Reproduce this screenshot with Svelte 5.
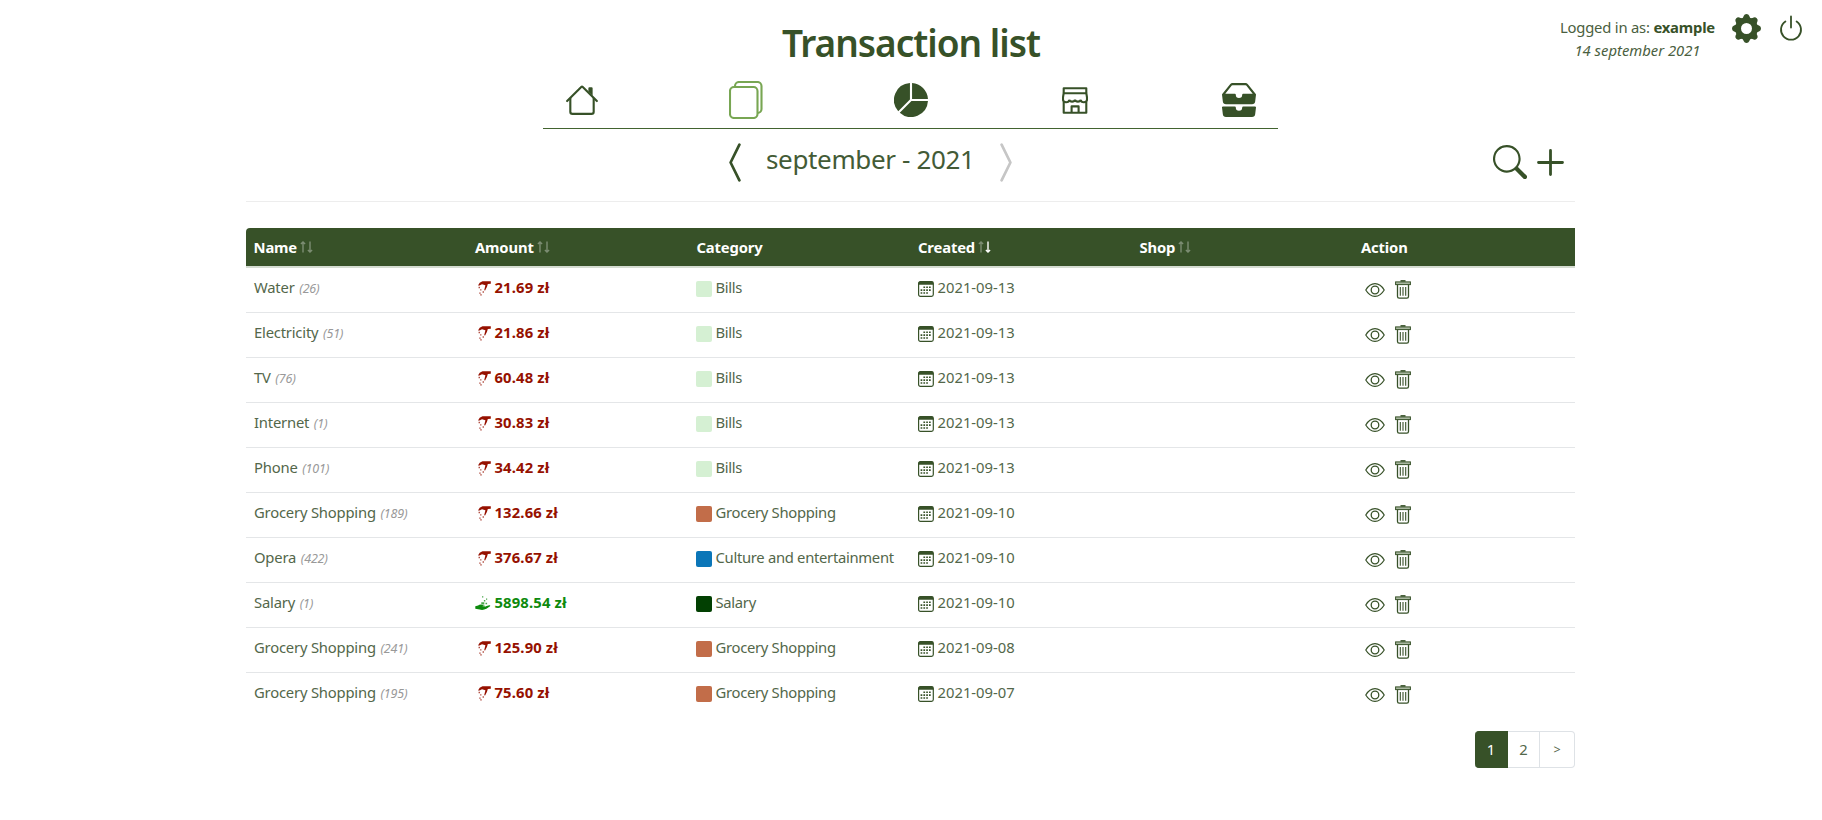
<script>
  const columns = [
    { label: 'Name', sort: 'none' },
    { label: 'Amount', sort: 'none' },
    { label: 'Category' },
    { label: 'Created', sort: 'desc' },
    { label: 'Shop', sort: 'none' },
    { label: 'Action' }
  ];
  const colors = {
    Bills: '#d5f0d3',
    'Grocery Shopping': '#c26d49',
    'Culture and entertainment': '#0b76b8',
    Salary: '#024002'
  };
  const rows = [
    ['Water', 26, '21.69', 'Bills', '2021-09-13'],
    ['Electricity', 51, '21.86', 'Bills', '2021-09-13'],
    ['TV', 76, '60.48', 'Bills', '2021-09-13'],
    ['Internet', 1, '30.83', 'Bills', '2021-09-13'],
    ['Phone', 101, '34.42', 'Bills', '2021-09-13'],
    ['Grocery Shopping', 189, '132.66', 'Grocery Shopping', '2021-09-10'],
    ['Opera', 422, '376.67', 'Culture and entertainment', '2021-09-10'],
    ['Salary', 1, '5898.54', 'Salary', '2021-09-10'],
    ['Grocery Shopping', 241, '125.90', 'Grocery Shopping', '2021-09-08'],
    ['Grocery Shopping', 195, '75.60', 'Grocery Shopping', '2021-09-07']
  ];
</script>

<div class="page">
  <header>
    <h1>Transaction list</h1>
    <div class="user">
      <div class="who">
        <div>Logged in as: <b>example</b></div>
        <i>14 september 2021</i>
      </div>
      <svg class="gear" width="29" height="29" viewBox="-14 -14 28 28">
        <circle r="8" fill="none" stroke="currentColor" stroke-width="5.4" />
        {#each [0, 45, 90, 135, 180, 225, 270, 315] as a}
          <path transform="rotate({a})" d="M-5-9.3Q-3.1-10.2-2.6-12.4Q-2-14 0-14T2.6-12.4Q3.1-10.2 5-9.3z" fill="currentColor" />
        {/each}
      </svg>
      <svg class="power" width="24" height="26" viewBox="0 0 24 26" fill="none" stroke="currentColor" stroke-width="1.8" stroke-linecap="round">
        <path d="M12 1.5v11M6.4 6.4a10 10 0 1 0 11.2 0" />
      </svg>
    </div>
  </header>

  <nav>
    <span>
      <svg width="34" height="34" viewBox="0 0 16 16" fill="currentColor"><path d="M2 13.5V7h1v6.5a.5.5 0 0 0 .5.5h9a.5.5 0 0 0 .5-.5V7h1v6.5a1.5 1.5 0 0 1-1.5 1.5h-9A1.5 1.5 0 0 1 2 13.5zm11-11V6l-2-2V2.5a.5.5 0 0 1 .5-.5h1a.5.5 0 0 1 .5.5z" /><path d="M7.293 1.5a1 1 0 0 1 1.414 0l6.647 6.646a.5.5 0 0 1-.708.708L8 2.207 1.354 8.854a.5.5 0 1 1-.708-.708L7.293 1.5z" /></svg>
    </span>
    <span class="active">
      <svg width="34" height="38" viewBox="0 0 34 38" fill="none" stroke="currentColor" stroke-width="2.1"><rect x="1" y="6" width="27.5" height="31" rx="4" /><path d="M6 6V5a4 4 0 0 1 4-4h18.5a4 4 0 0 1 4 4v23a4 4 0 0 1-4 4" /></svg>
    </span>
    <span>
      <svg width="34" height="34" viewBox="0 0 16 16" fill="currentColor"><path d="M15.985 8.5H8.207l-5.5 5.5a8 8 0 0 0 13.277-5.5zM2 13.292A8 8 0 0 1 7.5.015v7.778l-5.5 5.5zM8.5.015V7.5h7.485A8.001 8.001 0 0 0 8.5.015z" /></svg>
    </span>
    <span>
      <svg width="26" height="27" viewBox="0 0 26 27" fill="none" stroke="currentColor" stroke-width="2.1"><path d="M1.7 6V1.2h22.6V6M1.7 6.3h22.6M1.7 15v10.8h22.6V15M9.6 25.5v-6.1h7v6.1" stroke-linejoin="round" /><path d="M1.7 6L1 10.4v2.1c0 3.7 6 3.7 6.2.2 .6 2.6 5.2 2.6 5.8 0 .6 2.6 5.2 2.6 5.8 0 .2 3.5 6.2 3.5 6.2-.2v-2.1L24.3 6" /></svg>
    </span>
    <span>
      <svg width="34" height="34" viewBox="0 0 16 16" fill="currentColor"><path d="M4.98 1a.5.5 0 0 0-.39.188L1.54 5H6a.5.5 0 0 1 .5.5 1.5 1.5 0 0 0 3 0A.5.5 0 0 1 10 5h4.46l-3.05-3.812A.5.5 0 0 0 11.02 1H4.98zM3.81.563A1.5 1.5 0 0 1 4.98 0h6.04a1.5 1.5 0 0 1 1.17.563l3.7 4.625a.5.5 0 0 1 .106.374l-.39 3.124A1.5 1.5 0 0 1 14.117 10H1.883A1.5 1.5 0 0 1 .394 8.686l-.39-3.124a.5.5 0 0 1 .106-.374L3.81.563zM.125 11.17A.5.5 0 0 1 .5 11H6a.5.5 0 0 1 .5.5 1.5 1.5 0 0 0 3 0 .5.5 0 0 1 .5-.5h5.5a.5.5 0 0 1 .496.562l-.39 3.124A1.5 1.5 0 0 1 14.117 16H1.883a1.5 1.5 0 0 1-1.489-1.314l-.39-3.124a.5.5 0 0 1 .121-.393z" /></svg>
    </span>
  </nav>

  <main>
    <div class="period">
      <svg width="12" height="39" viewBox="0 0 12 39" fill="none" stroke="currentColor" stroke-width="2.7" stroke-linecap="round" stroke-linejoin="round"><path d="M10.4 1.6L1.6 19.5l8.8 17.9" /></svg>
      <span class="month">september - 2021</span>
      <svg class="off" width="12" height="39" viewBox="0 0 12 39" fill="none" stroke="currentColor" stroke-width="2.7" stroke-linecap="round" stroke-linejoin="round"><path d="M1.6 1.6l8.8 17.9-8.8 17.9" /></svg>
      <div class="tools">
        <svg width="34" height="34" viewBox="0 0 16 16" fill="currentColor"><path d="M11.742 10.344a6.5 6.5 0 1 0-1.397 1.398h-.001c.03.04.062.078.098.115l3.85 3.85a1 1 0 0 0 1.415-1.414l-3.85-3.85a1.007 1.007 0 0 0-.115-.1zM12 6.5a5.5 5.5 0 1 1-11 0 5.5 5.5 0 0 1 11 0z" /></svg>
        <svg width="27" height="27" viewBox="0 0 27 27" stroke="currentColor" stroke-width="2.8" stroke-linecap="round"><path d="M13.5 1.5v24M1.5 13.5h24" /></svg>
      </div>
    </div>

    <div class="table">
      <div class="row head">
        {#each columns as c}
          <div>
            {c.label}
            {#if c.sort}
              <svg class="sort" width="13" height="12" viewBox="0 0 13 12" fill="none" stroke="#fff" stroke-width="1.4">
                <path d="M3 11.5V1M.9 3.1L3 1l2.1 2.1" opacity=".35" />
                <path d="M10 .5V11M7.9 8.9L10 11l2.1-2.1" opacity={c.sort === 'desc' ? 1 : 0.35} />
              </svg>
            {/if}
          </div>
        {/each}
      </div>
      {#each rows as [name, count, amount, category, date]}
        <div class="row">
          <div class="name">{name}&nbsp;<small>({count})</small></div>
          <div class="amount" class:income={name === 'Salary'}>
            {#if name === 'Salary'}
              <svg width="16" height="16" viewBox="0 0 16 16" fill="currentColor"><path d="M.3 11.2l2.8-.6Q5 8.900 7 9.700l1.600.7q2 0 1.100 1.100H7q3 .8 4.600-.4l2.600-.8q1.500-.2.900.9l-3.700 2.600Q8 15.600 4.700 14.600L.3 13.800z" /><path d="M6.3 7.200h3v2.400h-3zM8.900 5h1.400v1.400H8.900zM7 1.200h1.300v1.300H7zM11 3.500h1.200v1.200H11zM10.500 7.800h1.600v1.400h-1.600z" opacity=".75" /></svg>
            {:else}
              <svg width="16" height="16" viewBox="0 0 16 16" fill="currentColor"><path d="M7.500 1.300L15.800 1.200V3.800l-3 .3-.8 2.700-1.900 3.800-.9-.4 1.200-5L7 4.200 4.500 5.500 3 5.600 4.700 2.700z" /><path d="M3.600 6.700h1.300v1.500H3.600zM5.200 9.200h1.200v1.300H5.200zM7.600 11.300h1.300v1.400H7.600zM4.300 12.500h1.300v1.300H4.300zM5.300 14.200h1.400v1.200H5.300z" opacity=".8" /></svg>
            {/if}
            <b>{amount} zł</b>
          </div>
          <div class="icontext category"><span class="swatch" style:background={colors[category]}></span>{category}</div>
          <div class="icontext">
            <svg width="16" height="16" viewBox="0 0 16 16" fill="none"><rect x=".6" y=".6" width="14.7" height="14.7" rx="1.8" stroke="currentColor" stroke-width="1.2" /><path d="M.5 3.800V2Q.5.500 2 .500h12q1.400 0 1.400 1.500v1.800z" fill="currentColor" /><path d="M5.400 6.300h8.200M2.600 9.100h11M2.600 12h8.200" stroke="currentColor" stroke-width="1.6" stroke-dasharray="1.7 1.1" /></svg>{date}
          </div>
          <div></div>
          <div class="actions">
            <svg width="20" height="14" viewBox="0 0 20 14" fill="none" stroke="currentColor" stroke-width="1.2"><path d="M.8 7Q4.500.700 10 .700T19.200 7Q15.500 13.300 10 13.300T.8 7z" /><circle cx="10" cy="7" r="3.8" stroke-width="1.3" /></svg>
            <svg width="16" height="19" viewBox="0 0 16 19" fill="none" stroke="currentColor"><path d="M5.500.900h5" stroke-width="1.6" /><rect x=".6" y="1.9" width="14.8" height="2.7" fill="#a9b7a0" /><path d="M2.500 4.800v11.700q0 1.700 1.700 1.700h7.600q1.700 0 1.700-1.700V4.800" stroke-width="1.3" /><path d="M5.300 7v8.800M8 7v8.800M10.700 7v8.800" stroke-width="1.1" /></svg>
          </div>
        </div>
      {/each}
    </div>

    <div class="pages"><span class="current">1</span><span>2</span><span class="next">&gt;</span></div>
  </main>
</div>

<style>
  :global(body) { background: #fff; }
  .page {
    height: 820px;
    overflow: hidden;
    font-family: 'Noto Sans', 'Open Sans', sans-serif;
    font-size: 14.8px;
    line-height: 24px;
    color: #375128;
  }
  svg { display: block; flex: none; color: #375128; }
  header {
    display: grid;
    grid-template-columns: 1fr auto 1fr;
    height: 80px;
  }
  h1 {
    grid-column: 2;
    margin: 19px 0 0;
    font-size: 37px;
    line-height: 48px;
    font-weight: 560;
    letter-spacing: -1px;
    white-space: nowrap;
  }
  .user {
    display: flex;
    justify-content: flex-end;
    align-items: flex-start;
    padding: 14px 19px 0 0;
  }
  .who { text-align: center; line-height: 23px; padding-top: 2px; margin-right: 17px; letter-spacing: -0.2px; color: #4a6040; }
  .who div, .who i { display: block; white-space: nowrap; }
  .who i { letter-spacing: 0; }
  .who b { color: #375128; }
  .gear { margin-right: 18px; }
  .power { margin-top: 1px; }
  nav {
    width: 735px;
    height: 48px;
    margin: 0 0 0 543px;
    display: flex;
    justify-content: space-between;
    border-bottom: 1px solid #42632f;
  }
  nav span { width: 78px; height: 40px; display: flex; align-items: center; justify-content: center; }
  .active svg { color: #78a653; }
  main { width: 1329px; margin: 0 0 0 246px; }
  .period {
    height: 66px;
    display: flex;
    align-items: center;
    padding-left: 483px;
    border-bottom: 1px solid #ededed;
    padding-bottom: 6px;
  }
  .month { width: 206px; margin: -6px 28px 0 25px; font-size: 26px; letter-spacing: -0.35px; color: #435b36; white-space: nowrap; }
  .period .off { color: #c6c6c6; }
  .tools { margin-left: auto; padding-right: 11px; display: flex; align-items: center; gap: 10px; }
  .table { margin-top: 26px; }
  .row {
    display: grid;
    grid-template-columns: repeat(6, 1fr);
    height: 44px;
    border-bottom: 1px solid #e4e6e8;
    color: #53674a;
  }
  .row > div { padding: 7px 0 0 7.5px; white-space: nowrap; }
  .row .name { padding-left: 8px; letter-spacing: -0.2px; }
  .row .category { letter-spacing: -0.3px; gap: 5px; }
  .row:last-child { border-color: transparent; }
  .row.head {
    background: #375128;
    background-clip: padding-box;
    color: #fff;
    font-weight: 700;
    height: 38px;
    border-bottom: 2px solid #d5dcd2;
    border-radius: 4px 0 0 0;
    letter-spacing: -0.15px;
  }
  .row.head > div { display: flex; align-items: center; gap: 3px; padding: 0 0 1px 7.5px; }
  .sort { margin-top: 1px; }
  small { margin-left: 1px; font-size: 12.5px; font-style: italic; color: #999; }
  .row .icontext, .row .amount { display: flex; align-items: flex-start; gap: 4px; }
  .icontext svg, .swatch, .amount svg { margin-top: 6px; margin-left: -0.5px; }
  .icontext svg { margin-top: 5.5px; }
  .swatch { width: 15.5px; height: 15.5px; border-radius: 2px; }
  .row .amount { color: #961100; letter-spacing: 0.15px; }
  .amount svg { color: inherit; margin-top: 5px; }
  .row .income { color: #0d8a0d; }
  .row .actions { display: flex; align-items: center; gap: 10px; padding: 0 0 1px 11px; }
  .pages { display: flex; justify-content: flex-end; margin-top: 13px; color: #53674a; }
  .pages span {
    box-sizing: border-box;
    width: 32px;
    height: 37px;
    line-height: 35px;
    text-align: center;
    border: 1px solid #dee2e6;
    border-left: 0;
  }
  .pages .current { width: 33px; background: #375128; border-color: #375128; color: #fff; border-radius: 4px 0 0 4px; }
  .pages .next { width: 35px; border-radius: 0 4px 4px 0; font-size: 12.5px; }
</style>
